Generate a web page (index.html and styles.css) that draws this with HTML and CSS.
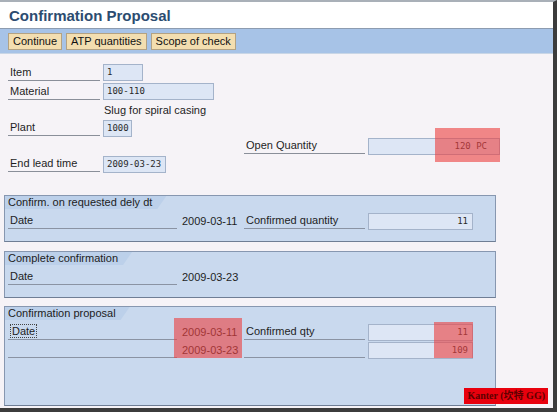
FILE: index.html
```html
<!DOCTYPE html>
<html lang="en">

<head>
    <meta charset="UTF-8" />
    <meta name="viewport" content="width=device-width, initial-scale=1.0" />
    <title>Confirmation Proposal</title>
    <link rel="stylesheet" href="styles.css">
</head>

<body>
    <div class="window">
        <div class="titlebar">
            <h1>Confirmation Proposal</h1>
        </div>

        <div class="toolbar">
            <button class="btn">Continue</button>
            <button class="btn">ATP quantities</button>
            <button class="btn">Scope of check</button>
        </div>

        <div class="content">
            <!-- header fields -->
            <div class="head-fields">
                <div class="row tall">
                    <span class="label">Item</span>
                    <span class="field mono w-item">1</span>
                </div>
                <div class="row tall">
                    <span class="label">Material</span>
                    <span class="field mono w-mat">100-110</span>
                </div>
                <div class="row">
                    <span class="label blank"></span>
                    <span class="text">Slug for spiral casing</span>
                </div>
                <div class="row">
                    <span class="label">Plant</span>
                    <span class="field mono w-plant">1000</span>
                </div>
                <div class="row">
                    <span class="label open-label">Open Quantity</span>
                    <span class="field mono right w-open">120 PC
                        <span class="mark mark-open"></span>
                    </span>
                </div>
                <div class="row">
                    <span class="label">End lead time</span>
                    <span class="field mono w-date">2009-03-23</span>
                </div>
            </div>

            <!-- group boxes -->
            <div class="group">
                <div class="group-title"><span>Confirm. on requested dely dt</span></div>
                <div class="grow">
                    <span class="glabel">Date</span>
                    <span class="gvalue">2009-03-11</span>
                    <span class="label qlabel">Confirmed quantity</span>
                    <span class="field mono right w-qty">11</span>
                </div>
            </div>

            <div class="group">
                <div class="group-title"><span>Complete confirmation</span></div>
                <div class="grow">
                    <span class="glabel">Date</span>
                    <span class="gvalue">2009-03-23</span>
                </div>
            </div>

            <div class="group group-last">
                <div class="group-title"><span>Confirmation proposal</span></div>
                <div class="grow">
                    <span class="glabel"><span class="focus">Date</span></span>
                    <span class="gvalue">2009-03-11</span>
                    <span class="label qlabel">Confirmed qty</span>
                    <span class="field mono right w-qty">11</span>
                </div>
                <div class="grow">
                    <span class="glabel"></span>
                    <span class="gvalue">2009-03-23</span>
                    <span class="label qlabel"></span>
                    <span class="field mono right w-qty">109</span>
                </div>
                <span class="mark mark-dates"></span>
                <span class="mark mark-qty"></span>
            </div>
        </div>

        <div class="stamp">Kanter (坎特 GG)</div>
    </div>
</body>

</html>
```

FILE: styles.css
```css
* {
    margin: 0;
    padding: 0;
    box-sizing: border-box;
}

body {
    background: #f6f3f7;
    font-family: "Liberation Sans", Arial, sans-serif;
    font-size: 11px;
    color: #1e1e1e;
}

.window {
    position: relative;
    width: 557px;
    height: 412px;
    border-top: 2px solid #a9b0b8;
    border-right: 4px solid #3c3c3c;
    border-bottom: 4px solid #3c3c3c;
    background: #f6f3f7;
    overflow: hidden;
}

/* title */
.titlebar {
    height: 27px;
    background: #fff;
    border-bottom: 1px solid #8d9cb0;
    padding: 1px 0 0 9px;
    display: flex;
    align-items: center;
}

.titlebar h1 {
    font-size: 15px;
    font-weight: bold;
    color: #2c4c70;
}

/* toolbar */
.toolbar {
    height: 25px;
    background: #a7c3e7;
    border-bottom: 1px solid #c9d6e6;
    display: flex;
    align-items: center;
    gap: 4px;
    padding-left: 8px;
}

.btn {
    height: 17px;
    padding: 0 4px;
    background: #f3deb0;
    border: 1px solid #b3a283;
    font-family: inherit;
    font-size: 11px;
    color: #111;
    line-height: 15px;
}

/* fields */
.head-fields {
    padding: 9px 0 0 8px;
}

.row {
    height: 18px;
    display: flex;
    align-items: center;
    gap: 3px;
}

.row.tall {
    height: 19px;
}

.label {
    width: 92px;
    height: 16px;
    line-height: 14px;
    padding-left: 2px;
    border-bottom: 1px solid #8a8f99;
}

.label.blank {
    border-bottom: none;
}

.open-label {
    width: 121px;
    margin-left: 236px;
}

.text {
    padding-left: 1px;
}

.field {
    position: relative;
    height: 17px;
    line-height: 15px;
    padding: 0 3px;
    background: #dde6f5;
    border: 1px solid #a4b3ca;
}

.mono {
    font-family: "DejaVu Sans Mono", "Liberation Mono", monospace;
    font-size: 9px;
    color: #2a2a2a;
}

.right {
    text-align: right;
    padding-right: 12px;
}

.w-item {
    width: 40px;
}

.w-mat {
    width: 111px;
}

.w-plant {
    width: 29px;
}

.w-date {
    width: 63px;
}

.w-open {
    width: 132px;
}

.w-qty {
    width: 105px;
    padding-right: 4px;
}

/* red highlight marks */
.mark {
    position: absolute;
    background: rgba(236, 66, 66, 0.62);
}

.mark-open {
    right: -1px;
    top: -11px;
    width: 65px;
    height: 34px;
}

.mark-dates {
    left: 169px;
    top: 11px;
    width: 68px;
    height: 40px;
}

.mark-qty {
    left: 429px;
    top: 15px;
    width: 39px;
    height: 36px;
}

/* group boxes */
.group {
    position: relative;
    width: 492px;
    margin: 22px 0 0 4px;
    height: 47px;
    background: #c9d9ee;
    border: 1px solid #8797b0;
    border-bottom-color: #6f7e95;
}

.group + .group {
    margin-top: 9px;
}

.group + .group-last {
    margin-top: 8px;
    height: 100px;
}

.group-title {
    height: 13px;
    display: flex;
}

.group-title span {
    height: 13px;
    line-height: 12px;
    padding: 0 14px 0 3px;
    background: #bcd0ea;
    color: #1c1c1c;
    clip-path: polygon(0 0, 100% 0, calc(100% - 9px) 100%, 0 100%);
}

.grow {
    height: 18px;
    display: flex;
    align-items: center;
    margin-top: 3px;
    padding-left: 3px;
}

.grow + .grow {
    margin-top: 0;
}

.glabel {
    width: 169px;
    height: 16px;
    line-height: 14px;
    padding-left: 2px;
    border-bottom: 1px solid #8a93a3;
}

.focus {
    border: 1px dotted #444;
    padding: 0 1px;
}

.gvalue {
    width: 67px;
    padding-left: 5px;
}

.qlabel {
    width: 121px;
    margin-right: 3px;
    border-bottom-color: #8a93a3;
}

/* watermark */
.stamp {
    position: absolute;
    right: 5px;
    bottom: 4px;
    height: 16px;
    padding: 0 3px;
    background: #e8000d;
    color: #5e0000;
    font-family: "Liberation Serif", "Noto Sans CJK SC", serif;
    font-size: 10px;
    font-weight: bold;
    line-height: 16px;
}
```
